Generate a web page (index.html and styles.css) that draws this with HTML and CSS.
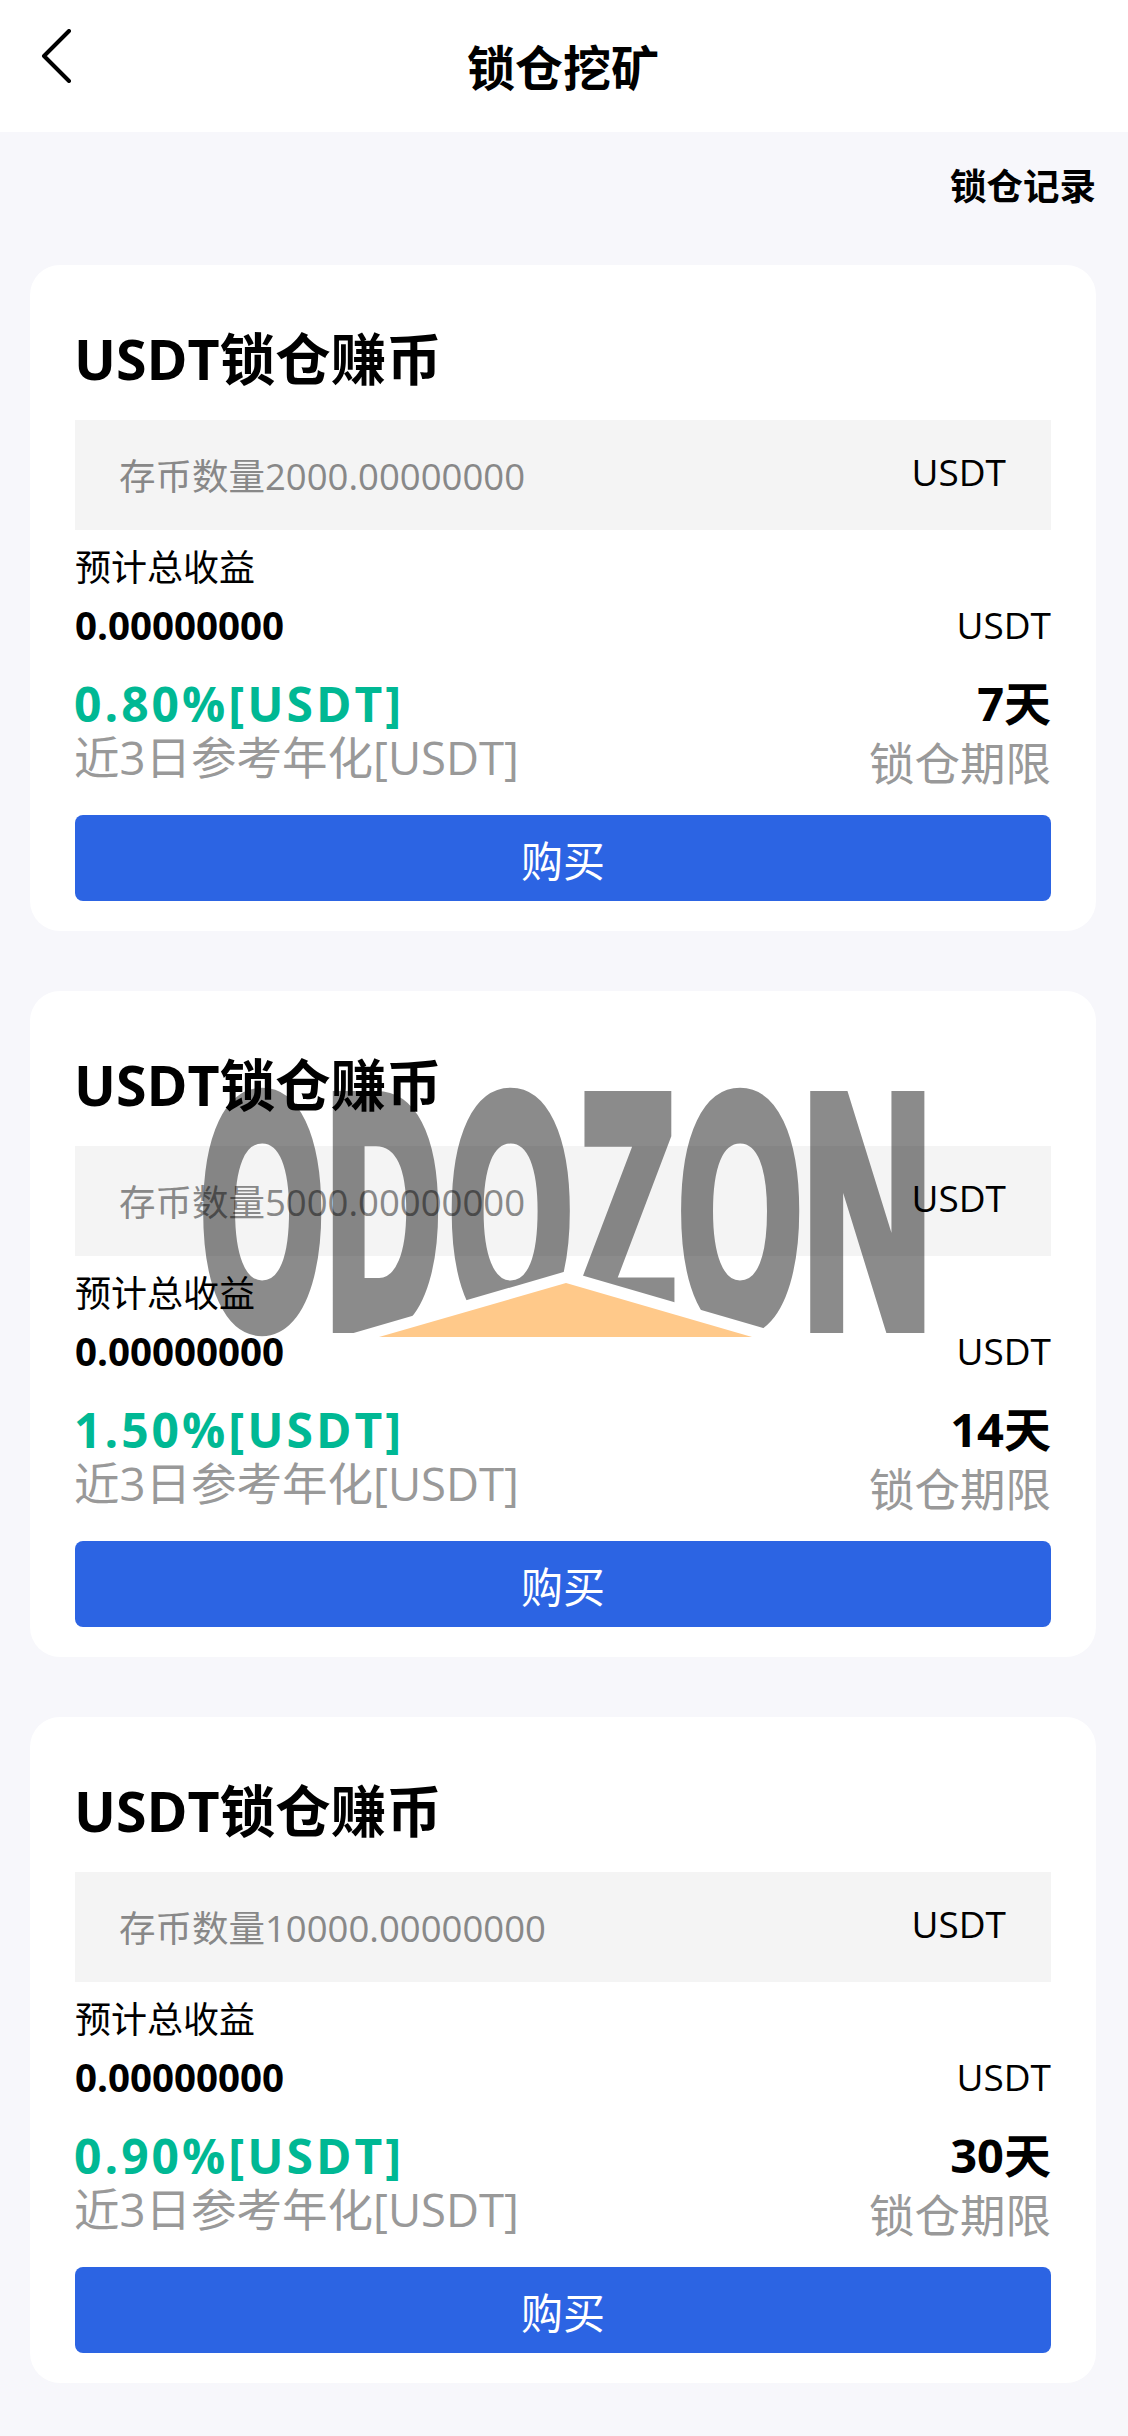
FILE: index.html
```html
<!DOCTYPE html>
<html lang="zh-CN">
<head>
    <meta charset="UTF-8">
    <meta name="viewport" content="width=device-width, initial-scale=1.0">
    <title>锁仓挖矿</title>
    <link rel="stylesheet" href="styles.css">
</head>
<body>
    <div class="page">
        <header class="topbar">
            <svg class="back" viewBox="0 0 32 54" aria-hidden="true"><path d="M28 2 L3 27 L28 52"/></svg>
            <h1>锁仓挖矿</h1>
        </header>
        <div class="record-link">锁仓记录</div>

        <section class="card">
            <h2>USDT锁仓赚币</h2>
            <div class="amount-box"><span class="placeholder">存币数量2000.00000000</span><span class="unit">USDT</span></div>
            <p class="income-label">预计总收益</p>
            <div class="income-row"><b>0.00000000</b><span>USDT</span></div>
            <div class="stats">
                <div>
                    <p class="rate">0.80%[USDT]</p>
                    <p class="muted">近3日参考年化[USDT]</p>
                </div>
                <div class="stats-right">
                    <p class="days">7天</p>
                    <p class="muted">锁仓期限</p>
                </div>
            </div>
            <button class="buy">购买</button>
        </section>

        <section class="card">
            <h2>USDT锁仓赚币</h2>
            <div class="amount-box"><span class="placeholder">存币数量5000.00000000</span><span class="unit">USDT</span></div>
            <p class="income-label">预计总收益</p>
            <div class="income-row"><b>0.00000000</b><span>USDT</span></div>
            <div class="stats">
                <div>
                    <p class="rate">1.50%[USDT]</p>
                    <p class="muted">近3日参考年化[USDT]</p>
                </div>
                <div class="stats-right">
                    <p class="days">14天</p>
                    <p class="muted">锁仓期限</p>
                </div>
            </div>
            <button class="buy">购买</button>
        </section>

        <section class="card">
            <h2>USDT锁仓赚币</h2>
            <div class="amount-box"><span class="placeholder">存币数量10000.00000000</span><span class="unit">USDT</span></div>
            <p class="income-label">预计总收益</p>
            <div class="income-row"><b>0.00000000</b><span>USDT</span></div>
            <div class="stats">
                <div>
                    <p class="rate">0.90%[USDT]</p>
                    <p class="muted">近3日参考年化[USDT]</p>
                </div>
                <div class="stats-right">
                    <p class="days">30天</p>
                    <p class="muted">锁仓期限</p>
                </div>
            </div>
            <button class="buy">购买</button>
        </section>

        <!-- watermark logo sits over the second card -->
        <svg class="watermark" viewBox="0 0 721 250" aria-label="ODOZON">
            <defs>
                <mask id="cut" maskUnits="userSpaceOnUse" x="-20" y="-20" width="780" height="300">
                    <rect x="-20" y="-20" width="780" height="300" fill="#fff"/>
                    <polygon points="364,183 99,260 629,260" fill="#000"/>
                </mask>
            </defs>
            <g class="watermark-letters" mask="url(#cut)">
                <text transform="translate(0 235.5) scale(0.484 1)" x="-3.5 256 510 776 984" y="0">ODOZO</text>
                <text transform="translate(0 235.5) scale(0.545 1)" x="1102" y="0">N</text>
            </g>
            <polygon class="watermark-roof" points="363,195 176,249 549,249"/>
        </svg>
    </div>
</body>
</html>
```

FILE: styles.css
```css
* {
    box-sizing: border-box;
}
body {
    margin: 0;
    background-color: #f7f7fb;
    color: #000;
    font-family: "Open Sans", "Noto Sans CJK SC", sans-serif;
}
p, h1, h2 {
    margin: 0;
}
.page {
    position: relative;
    padding-bottom: 53px;
}
.topbar {
    height: 132px;
    background: #fff;
    display: flex;
    align-items: center;
    justify-content: center;
    position: relative;
}
.topbar h1 {
    font-size: 48px;
    font-weight: 700;
    line-height: 60px;
    margin-top: 4px;
    margin-right: 2px;
}
.back {
    position: absolute;
    left: 41px;
    top: 29px;
    width: 32px;
    height: 54px;
}
.back path {
    fill: none;
    stroke: #000;
    stroke-width: 4;
    stroke-linecap: round;
    stroke-linejoin: round;
}
.record-link {
    font-size: 36.5px;
    font-weight: 700;
    line-height: 50px;
    text-align: right;
    padding: 29px 32px 0 0;
    height: 133px;
}
.card {
    background: #fff;
    border-radius: 30px;
    margin: 0 32px 60px 30px;
    padding: 55px 45px 30px;
    height: 666px;
}
.card:last-of-type {
    margin-bottom: 0;
}
.card h2 {
    font-size: 55.5px;
    font-weight: 700;
    line-height: 78px;
    margin: 0 0 22px -1px;
}
.amount-box {
    height: 110px;
    background: #f4f4f4;
    padding: 0 45px 0 44px;
    display: flex;
    justify-content: space-between;
    align-items: center;
}
.placeholder {
    font-size: 36.5px;
    color: #888;
    margin-top: -2px;
}
.unit {
    font-size: 37px;
    margin-top: -7px;
}
.income-label {
    font-size: 36px;
    line-height: 56px;
    margin-top: 10px;
}
.income-row {
    display: flex;
    justify-content: space-between;
    font-size: 37px;
    line-height: 56px;
    margin-top: 1px;
}
.income-row b {
    font-size: 38.5px;
}
.stats {
    display: flex;
    justify-content: space-between;
    margin-top: 22px;
}
.stats-right {
    text-align: right;
}
.rate {
    font-size: 48px;
    font-weight: 700;
    line-height: 58px;
    letter-spacing: 3px;
    margin-left: -1px;
    color: #00b894;
}
.days {
    font-size: 47px;
    font-weight: 700;
    line-height: 56px;
}
.muted {
    font-size: 45.5px;
    line-height: 48px;
    margin-left: -1px;
    color: #999;
}
.stats-right .muted {
    line-height: 59px;
    padding-top: 3px;
}
.buy {
    display: block;
    width: 100%;
    height: 86px;
    margin-top: 22px;
    border: none;
    border-radius: 8px;
    background: #2c64e3;
    color: #fff;
    font-family: inherit;
    font-size: 42px;
}
.watermark {
    position: absolute;
    left: 203px;
    top: 1088px;
    width: 721px;
    height: 250px;
    overflow: visible;
    pointer-events: none;
}
.watermark-letters {
    opacity: 0.45;
}
.watermark-letters text {
    font-family: "Liberation Sans", sans-serif;
    font-weight: 700;
    font-size: 324px;
    fill: #000;
    stroke: #000;
    stroke-width: 19px;
}
.watermark-roof {
    fill: #ffc98a;
}
```
